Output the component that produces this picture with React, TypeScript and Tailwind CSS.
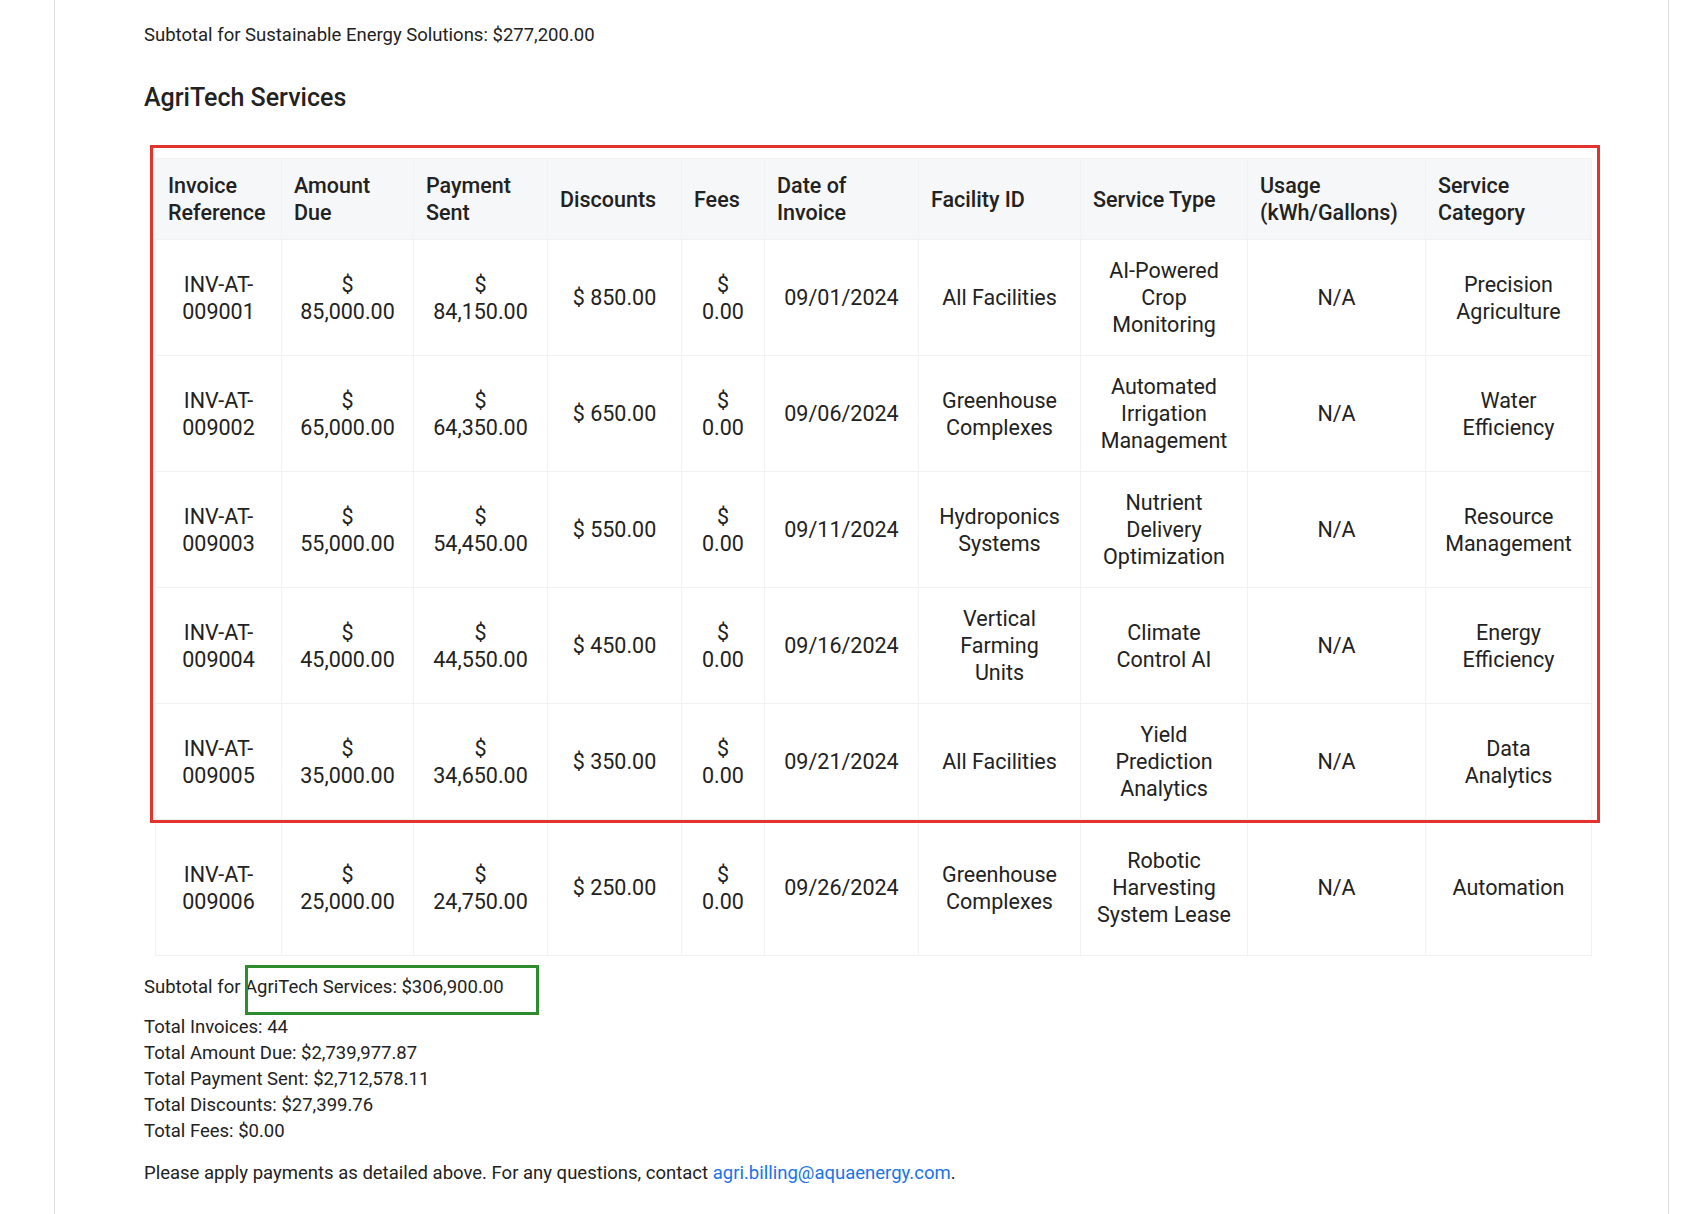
import React from "react";

const rows = [
  ["INV-AT-009001", "$ 85,000.00", "$ 84,150.00", "$ 850.00", "$ 0.00", "09/01/2024", "All Facilities", "AI-Powered Crop Monitoring", "N/A", "Precision Agriculture"],
  ["INV-AT-009002", "$ 65,000.00", "$ 64,350.00", "$ 650.00", "$ 0.00", "09/06/2024", "Greenhouse Complexes", "Automated Irrigation Management", "N/A", "Water Efficiency"],
  ["INV-AT-009003", "$ 55,000.00", "$ 54,450.00", "$ 550.00", "$ 0.00", "09/11/2024", "Hydroponics Systems", "Nutrient Delivery Optimization", "N/A", "Resource Management"],
  ["INV-AT-009004", "$ 45,000.00", "$ 44,550.00", "$ 450.00", "$ 0.00", "09/16/2024", "Vertical Farming Units", "Climate Control AI", "N/A", "Energy Efficiency"],
  ["INV-AT-009005", "$ 35,000.00", "$ 34,650.00", "$ 350.00", "$ 0.00", "09/21/2024", "All Facilities", "Yield Prediction Analytics", "N/A", "Data Analytics"],
  ["INV-AT-009006", "$ 25,000.00", "$ 24,750.00", "$ 250.00", "$ 0.00", "09/26/2024", "Greenhouse Complexes", "Robotic Harvesting System Lease", "N/A", "Automation"],
];
const headers = ["Invoice Reference", "Amount Due", "Payment Sent", "Discounts", "Fees", "Date of Invoice", "Facility ID", "Service Type", "Usage (kWh/Gallons)", "Service Category"];
const widths = [126, 132, 134, 134, 83, 154, 162, 167, 178, 166];

export default function App() {
  return (
    <div className="min-h-[1214px] bg-white text-[#222]" style={{ fontFamily: "Roboto, 'Liberation Sans', sans-serif" }}>
      <div className="ml-[54px] mr-[23px] border-x border-[#dcdcdc] min-h-[1214px] pl-[89px]">
        <div className="h-[1px]" />
        <p className="text-[18.5px] pt-[21px] leading-[26px]">Subtotal for Sustainable Energy Solutions: $277,200.00</p>
        <h2 className="text-[25px] font-medium mt-[35px] leading-[30px]">AgriTech Services</h2>
        <div className="relative mt-[45px] ml-[11px]">
          <table className="border-collapse table-fixed text-[21.5px] leading-[27px]" style={{ width: 1436 }}>
            <colgroup>
              {widths.map((w, i) => (
                <col key={i} style={{ width: w }} />
              ))}
            </colgroup>
            <thead>
              <tr className="bg-[#f6f7f9] h-[81px]">
                {headers.map((h) => (
                  <th key={h} className="text-left font-medium px-[12px] align-middle border border-[#f1f2f4]">
                    {h}
                  </th>
                ))}
              </tr>
            </thead>
            <tbody>
              {rows.map((r, i) => (
                <tr key={i} className={i === 5 ? "h-[136px]" : "h-[116px]"}>
                  {r.map((c, j) => (
                    <td key={j} className="text-center px-[14px] align-middle border border-[#f1f2f4]">
                      {c}
                    </td>
                  ))}
                </tr>
              ))}
            </tbody>
          </table>
          <div className="absolute left-[-5px] top-[-13px] w-[1450px] h-[678px] border-[3px] border-[#e4332c] pointer-events-none" />
        </div>
        <div className="text-[18.5px] leading-[26px] mt-[18px]">
          <p className="relative inline-block">
            Subtotal for AgriTech Services: $306,900.00
            <span className="absolute left-[101px] top-[-9px] w-[294px] h-[50px] border-[3px] border-[#2e8b2e]" />
          </p>
          <div className="mt-[14px]">
            <p>Total Invoices: 44</p>
            <p>Total Amount Due: $2,739,977.87</p>
            <p>Total Payment Sent: $2,712,578.11</p>
            <p>Total Discounts: $27,399.76</p>
            <p>Total Fees: $0.00</p>
          </div>
          <p className="mt-[16px]">
            Please apply payments as detailed above. For any questions, contact{" "}
            <a className="text-[#1a73e8]">agri.billing@aquaenergy.com</a>.
          </p>
        </div>
      </div>
    </div>
  );
}
